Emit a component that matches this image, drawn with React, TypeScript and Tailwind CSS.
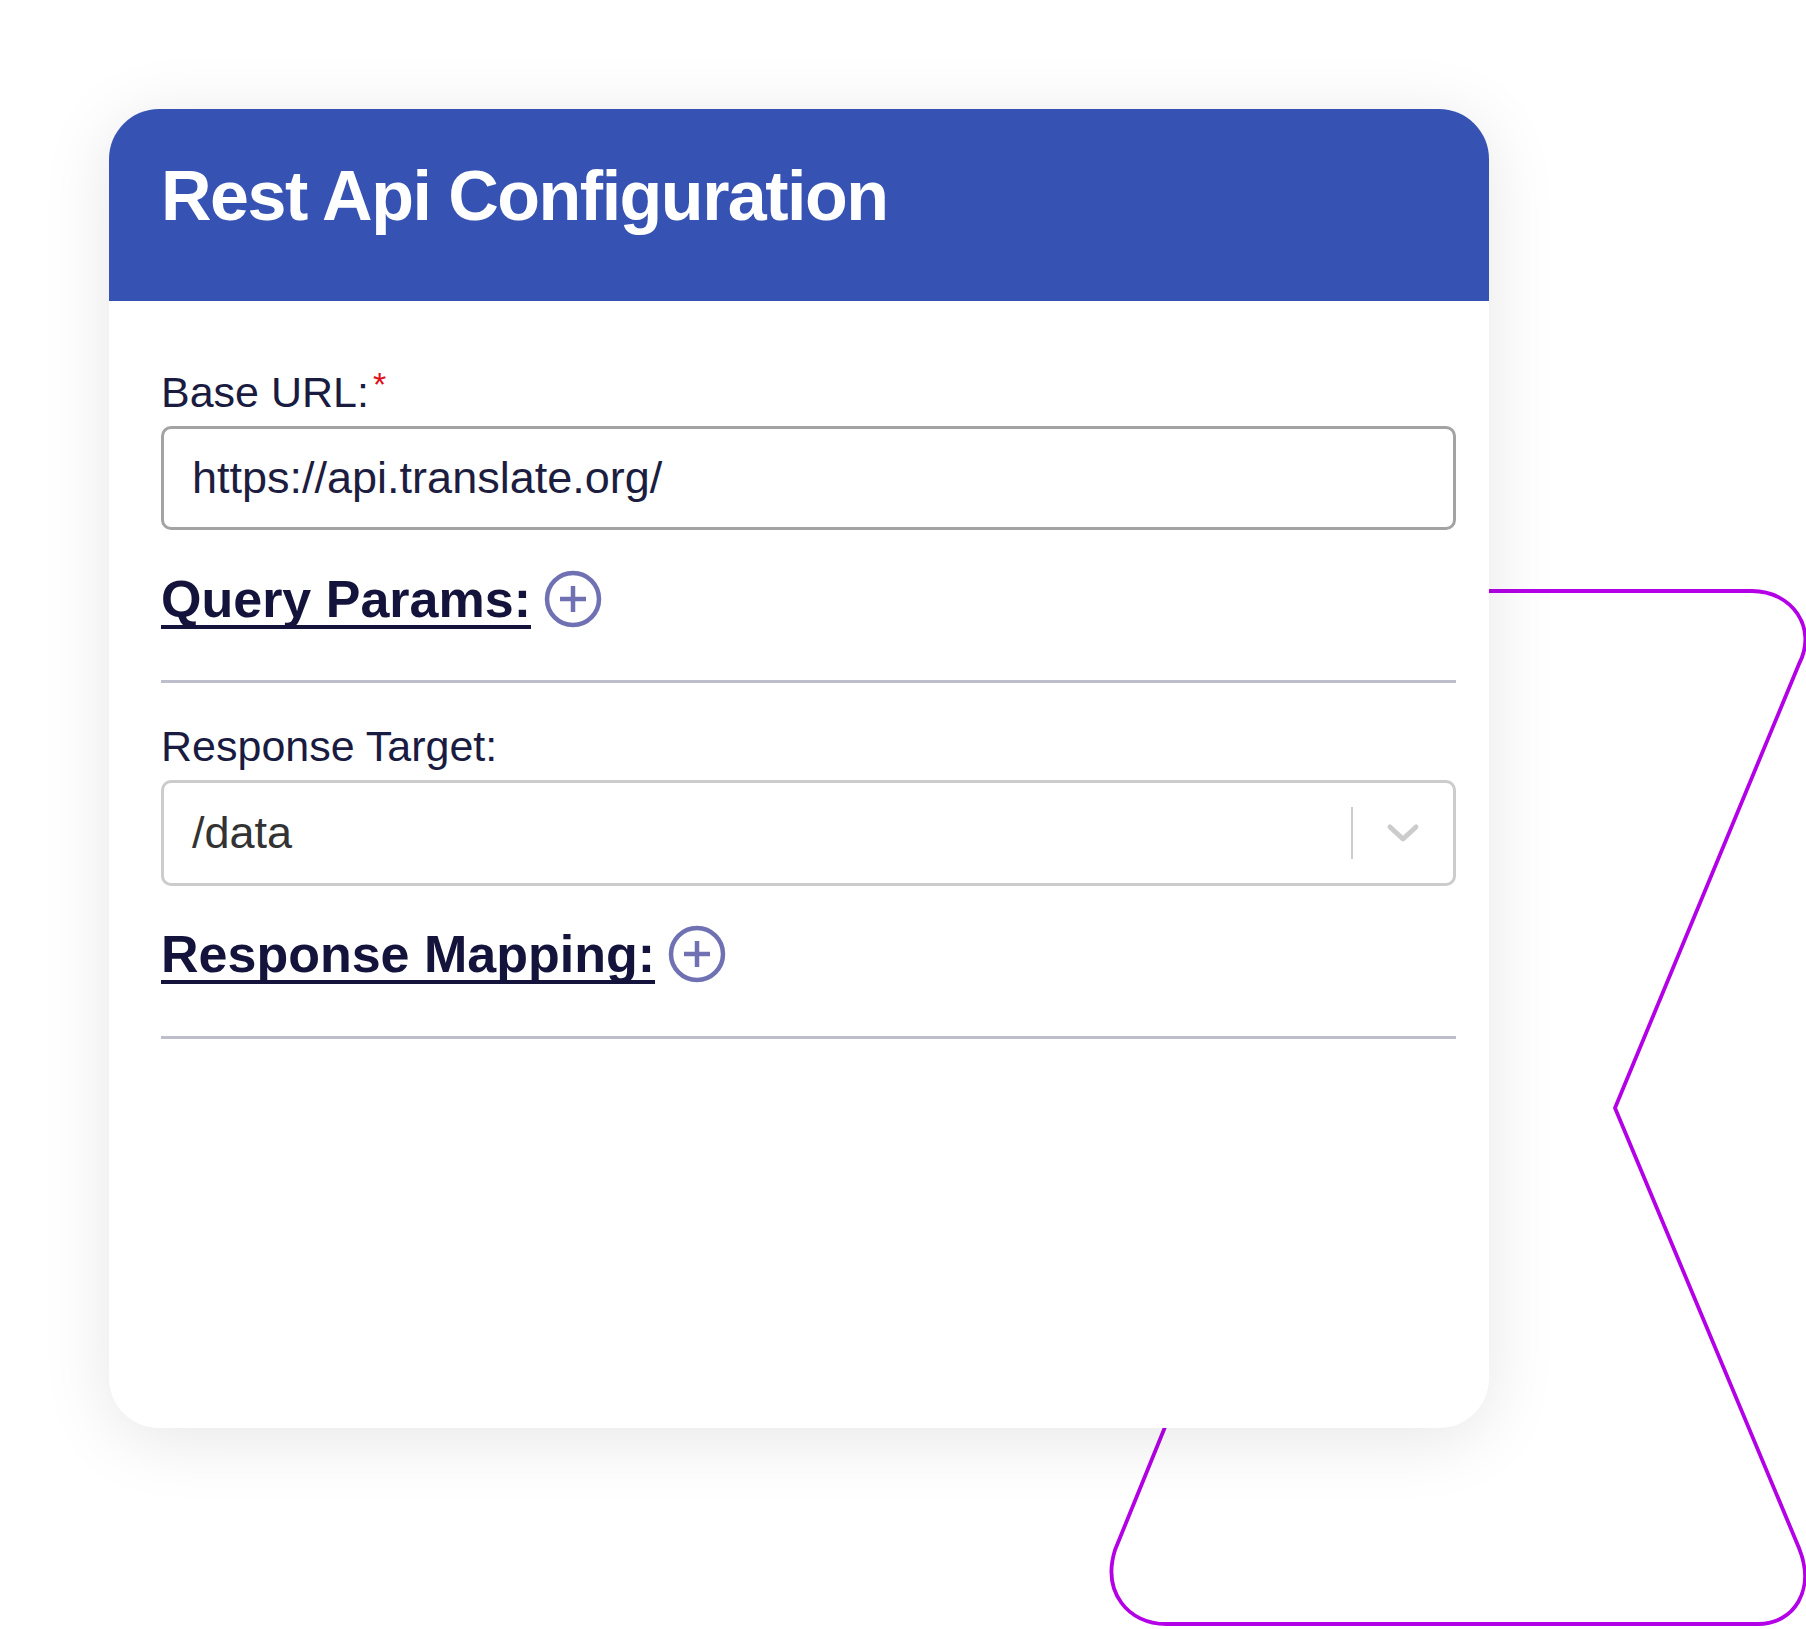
import React from "react";

function PlusIcon() {
  return (
    <svg width="58" height="58" viewBox="0 0 58 58" fill="none">
      <circle cx="29" cy="29" r="26" stroke="#6f71b3" strokeWidth="4.5" />
      <path d="M29 16 V42 M16 29 H42" stroke="#6f71b3" strokeWidth="4.5" strokeLinecap="butt" />
    </svg>
  );
}

function Chevron() {
  return (
    <svg width="34" height="20" viewBox="0 0 34 20" fill="none">
      <path d="M4 4 L17 16 L30 4" stroke="#cccccc" strokeWidth="5" strokeLinecap="round" strokeLinejoin="round" />
    </svg>
  );
}

export default function App() {
  return (
    <div className="relative w-[1806px] h-[1629px] bg-white overflow-hidden font-['Liberation_Sans',Arial,sans-serif]">
      <svg
        className="absolute left-0 top-0"
        width="1806"
        height="1629"
        viewBox="0 0 1806 1629"
        fill="none"
      >
        <path
          d="M1300 591 L1752 591 C1792 591 1818 628 1799 664 L1615 1108 L1799 1548 C1816 1590 1794 1624 1758 1624 L1166 1624 C1128 1624 1102 1592 1115 1550 L1420 800 Z"
          stroke="#b300e6"
          strokeWidth="3.8"
          strokeLinejoin="round"
        />
      </svg>

      <div className="relative z-10 ml-[109px] mt-[109px] w-[1380px] h-[1319px] rounded-[50px] bg-white overflow-hidden shadow-[0_10px_70px_rgba(0,0,0,0.10)]">
        <div className="h-[192px] bg-[#3653b4] pl-[52px] pt-[52px]">
          <h1 className="text-[70px] leading-[70px] font-bold text-white tracking-[-1.5px]">
            Rest Api Configuration
          </h1>
        </div>

        <div className="flex flex-col pl-[52px] pr-[33px] pt-[70px]">
          <div className="relative h-[43px] text-[43px] leading-[43px] text-[#1a1b41]">
            Base URL:
            <span className="absolute top-[-4px] ml-[4px] text-[34px] leading-[34px] text-[#e0101a]">*</span>
          </div>
          <div className="mt-3 h-[104px] border-[3px] border-[#a3a3a3] rounded-[10px] flex items-center pl-[28px] text-[45px] text-[#1d1d3f]">
            https://api.translate.org/
          </div>

          <div className="mt-[40px] flex items-center gap-[13px]">
            <span className="text-[52px] leading-[52px] font-bold text-[#13133b] underline decoration-[4px] underline-offset-[8px] [text-decoration-skip-ink:none]">
              Query Params:
            </span>
            <PlusIcon />
          </div>

          <div className="mt-[52px] h-[3px] bg-[#bdbdcc]" />

          <div className="mt-[42px] text-[43px] leading-[43px] text-[#1a1b41]">Response Target:</div>
          <div className="mt-3 h-[106px] border-[3px] border-[#cccccc] rounded-[10px] flex items-center pl-[28px] text-[45px] text-[#333333]">
            <span className="flex-1">/data</span>
            <div className="w-[2px] h-[52px] bg-[#cccccc]" />
            <div className="w-[100px] flex items-center justify-center">
              <Chevron />
            </div>
          </div>

          <div className="mt-[39px] flex items-center gap-[13px]">
            <span className="text-[52px] leading-[52px] font-bold text-[#13133b] underline decoration-[4px] underline-offset-[8px] [text-decoration-skip-ink:none]">
              Response Mapping:
            </span>
            <PlusIcon />
          </div>

          <div className="mt-[53px] h-[3px] bg-[#bdbdcc]" />
        </div>
      </div>
    </div>
  );
}
